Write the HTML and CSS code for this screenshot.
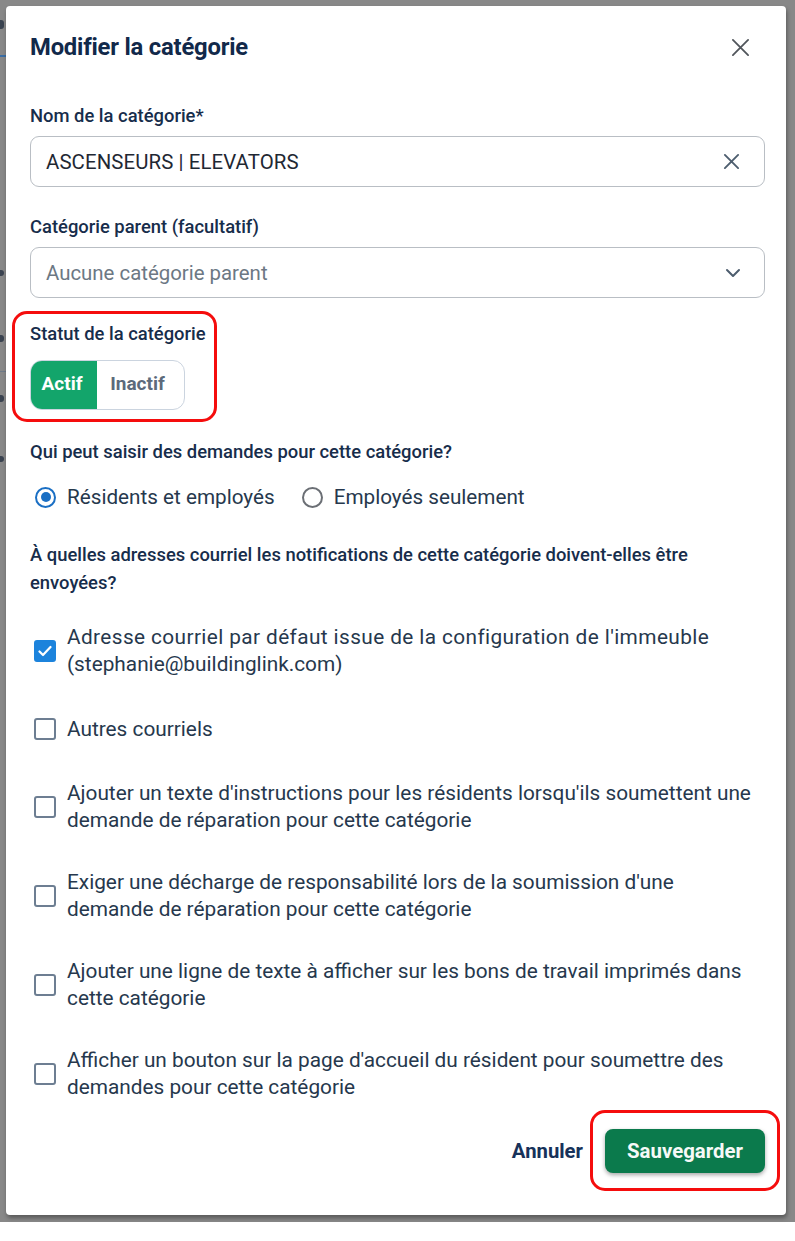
FILE: index.html
```html
<!DOCTYPE html>
<html lang="fr">
<head>
<meta charset="utf-8">
<title>Modifier la catégorie</title>
<link rel="stylesheet" href="styles.css">
</head>
<body>
<div class="backdrop">
  <div class="behind">
    <span class="mark m1"></span>
    <span class="line l1"></span>
    <span class="mark m2"></span>
    <span class="mark m3"></span>
    <span class="line l2"></span>
    <span class="mark m4"></span>
    <span class="mark m5"></span>
  </div>
  <div class="dialog">
    <div class="header">
      <h1 class="title">Modifier la catégorie</h1>
      <svg class="close" width="20" height="20" viewBox="0 0 20 20"><path d="M2 2 L18 18 M18 2 L2 18" stroke="#50555b" stroke-width="1.9" fill="none" stroke-linecap="round"/></svg>
    </div>

    <label class="label l-name">Nom de la catégorie*</label>
    <div class="field">
      <span class="value">ASCENSEURS | ELEVATORS</span>
      <svg class="clear" width="18" height="18" viewBox="0 0 18 18"><path d="M2 2 L16 16 M16 2 L2 16" stroke="#4d5d6e" stroke-width="2" fill="none" stroke-linecap="round"/></svg>
    </div>

    <label class="label l-parent">Catégorie parent (facultatif)</label>
    <div class="field">
      <span class="placeholder">Aucune catégorie parent</span>
      <svg class="chev" width="16" height="10" viewBox="0 0 16 10"><path d="M2 2 L8 8 L14 2" stroke="#4d5d6e" stroke-width="2" fill="none" stroke-linecap="round" stroke-linejoin="round"/></svg>
    </div>

    <div class="status-wrap">
      <div class="highlight hl-status"></div>
      <label class="label">Statut de la catégorie</label>
      <div class="toggle">
        <span class="seg on">Actif</span>
        <span class="seg off">Inactif</span>
      </div>
    </div>

    <div class="label l-who">Qui peut saisir des demandes pour cette catégorie?</div>
    <div class="radios">
      <div class="radio"><span class="dot checked"></span><span>Résidents et employés</span></div>
      <div class="radio"><span class="dot"></span><span>Employés seulement</span></div>
    </div>

    <div class="label l-mail">À quelles adresses courriel les notifications de cette catégorie doivent-elles être envoyées?</div>

    <div class="checks">
      <div class="check"><span class="box checked"><svg width="14" height="12" viewBox="0 0 14 12"><path d="M1.5 6.5 L5 10 L12.5 2" stroke="#fff" stroke-width="2.2" fill="none" stroke-linecap="round" stroke-linejoin="round"/></svg></span><span class="ctext"><span class="wide">Adresse courriel par défaut issue de la configuration de l'immeuble</span><br>(stephanie@buildinglink.com)</span></div>
      <div class="check"><span class="box"></span><span class="ctext">Autres courriels</span></div>
      <div class="check"><span class="box"></span><span class="ctext">Ajouter un texte d'instructions pour les résidents lorsqu'ils soumettent une<br>demande de réparation pour cette catégorie</span></div>
      <div class="check"><span class="box"></span><span class="ctext">Exiger une décharge de responsabilité lors de la soumission d'une<br>demande de réparation pour cette catégorie</span></div>
      <div class="check"><span class="box"></span><span class="ctext">Ajouter une ligne de texte à afficher sur les bons de travail imprimés dans<br>cette catégorie</span></div>
      <div class="check"><span class="box"></span><span class="ctext">Afficher un bouton sur la page d'accueil du résident pour soumettre des<br>demandes pour cette catégorie</span></div>
    </div>

    <div class="footer">
      <span class="cancel">Annuler</span>
      <div class="save-wrap">
        <div class="highlight hl-save"></div>
        <span class="save">Sauvegarder</span>
      </div>
    </div>
  </div>
</div>
</body>
</html>
```
FILE: styles.css
```css
* { box-sizing: border-box; }
html, body { margin: 0; padding: 0; background: #ffffff; }
body { font-family: Roboto, "Liberation Sans", sans-serif; width: 795px; height: 1241px; overflow: hidden; }

.backdrop {
  position: relative;
  background: #888888;
  height: 1222px;
  padding: 6px 9px 0 6px;
}
.behind { position: absolute; left: 0; top: 0; width: 6px; height: 1222px; overflow: hidden; }
.mark { position: absolute; left: 0; width: 4px; height: 9px; background: #3a4350; border-radius: 0 3px 3px 0; }
.m1 { top: 20px; }
.m2 { top: 270px; height: 6px; }
.m3 { top: 335px; height: 7px; }
.m4 { top: 395px; height: 7px; }
.m5 { top: 456px; height: 6px; }
.line { position: absolute; left: 0; width: 6px; height: 1px; background: #6e7a88; }
.l1 { top: 55px; height: 2px; background: #3b6ea5; }
.l2 { top: 371px; }

.dialog {
  position: relative;
  background: #ffffff;
  width: 780px;
  height: 1209px;
  border-radius: 4px;
  padding: 0 21px 0 24px;
  box-shadow: 1px 3px 4px rgba(0,0,0,0.35);
  color: #1d2f45;
}

.header {
  display: flex;
  align-items: center;
  justify-content: space-between;
  padding-top: 26px;
  height: 56px;
}
.title { margin: 0; font-size: 23.8px; line-height: 30px; font-weight: 700; color: #12294a; letter-spacing: -0.2px; }
.close { margin-right: 15px; width: 19px; height: 19px; }

.label {
  display: block;
  font-size: 18.4px;
  line-height: 24px;
  font-weight: 500;
  color: #172d4b;
}
.l-name { margin-top: 42px; }
.l-parent { margin-top: 28px; }
.l-who { margin-top: 30px; }
.l-mail { margin-top: 30px; line-height: 28px; width: 715px; }

.field {
  margin-top: 8px;
  height: 51px;
  border: 1.5px solid #b9bec4;
  border-radius: 9px;
  display: flex;
  align-items: center;
  justify-content: space-between;
  padding: 0 23px 0 15px;
  font-size: 20.4px;
}
.value { color: #1f2833; letter-spacing: 0.1px; }
.placeholder { color: #6c7884; }
.clear { width: 17px; height: 17px; margin-right: 1px; }
.chev { width: 16px; height: 10px; }

.status-wrap { position: relative; padding-top: 24px; }
.highlight {
  position: absolute;
  border: 3.5px solid #f50d0d;
  border-radius: 15px;
  pointer-events: none;
}
.hl-status { left: -18px; top: 13px; width: 205px; height: 111px; }

.toggle {
  margin-top: 14px;
  display: inline-flex;
  height: 50px;
  border: 1.5px solid #cbd4df;
  border-radius: 12px;
  overflow: hidden;
  font-size: 19px;
  font-weight: 700;
}
.seg { display: flex; align-items: center; justify-content: center; padding-bottom: 4px; }
.seg.on { width: 66px; background: #13a56b; color: #ffffff; padding-right: 4px; }
.seg.off { width: 87px; color: #5c6a7b; padding-right: 6px; }

.radios {
  margin-top: 19px;
  display: flex;
  gap: 27px;
  height: 28px;
  align-items: center;
  font-size: 20.7px;
  color: #26384d;
}
.radio { display: flex; align-items: center; gap: 11px; }
.dot {
  margin-left: 5px;
  width: 21px; height: 21px;
  border-radius: 50%;
  border: 2px solid #6b6f75;
  position: relative;
}
.radio + .radio .dot { margin-left: 0; }
.dot.checked { border-color: #1a6fc4; }
.dot.checked::after {
  content: "";
  position: absolute;
  left: 3.5px; top: 3.5px;
  width: 10px; height: 10px;
  border-radius: 50%;
  background: #1a6fc4;
}

.checks {
  margin-top: 27px;
  display: flex;
  flex-direction: column;
  gap: 35px;
}
.check {
  display: flex;
  align-items: center;
  min-height: 32px;
  gap: 11px;
}
.box {
  flex: none;
  margin-left: 4px;
  width: 22px; height: 22px;
  border: 2px solid #6d7e92;
  border-radius: 3px;
  display: flex;
  align-items: center;
  justify-content: center;
}
.box.checked { background: #1c83dc; border-color: #1c83dc; }
.ctext { font-size: 20.8px; line-height: 27px; color: #26384d; }
.wide { letter-spacing: 0.4px; }

.footer {
  margin-top: 28px;
  display: flex;
  justify-content: flex-end;
  align-items: center;
  gap: 22px;
}
.cancel { font-size: 20.3px; font-weight: 700; color: #17325a; }
.save-wrap { position: relative; }
.hl-save { left: -15px; top: -19px; width: 190px; height: 81px; }
.save {
  display: flex;
  align-items: center;
  justify-content: center;
  width: 160px;
  height: 44px;
  border-radius: 8px;
  background: #0b7a4c;
  color: #f6f9f7;
  font-size: 20.4px;
  font-weight: 700;
  box-shadow: 0 2px 4px rgba(0,0,0,0.35);
}
```
